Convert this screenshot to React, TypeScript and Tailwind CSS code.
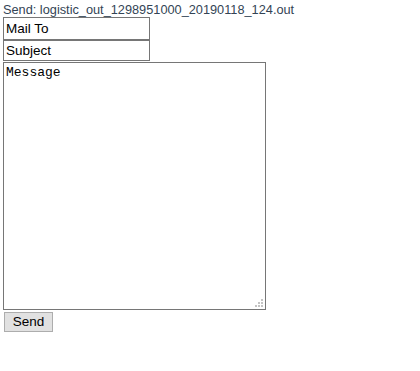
export default function App() {
  return (
    <div className="min-h-[371px] w-[420px] bg-white px-[3px] pt-[3px]" style={{ fontFamily: '"Liberation Sans", Arial, sans-serif' }}>
      <div className="text-[12.75px] leading-[14px] text-[#334455]">Send: logistic_out_1298951000_20190118_124.out</div>
      <form className="flex flex-col items-start" onSubmit={(e) => e.preventDefault()}>
        <input
          type="text"
          placeholder="Mail To"
          className="block h-[23px] w-[147px] border border-[#767676] px-[2px] text-[13.5px] text-black placeholder:text-black outline-none"
        />
        <input
          type="text"
          placeholder="Subject"
          className="block h-[21px] w-[147px] border border-[#767676] px-[2px] text-[13.5px] text-black placeholder:text-black outline-none"
        />
        <div className="relative mt-px">
          <textarea
            placeholder="Message"
            className="block h-[248px] w-[263px] resize-none border border-[#767676] px-[2px] py-[2px] text-[13px] leading-[15px] text-black placeholder:text-black outline-none"
            style={{ fontFamily: '"Liberation Mono", "Courier New", monospace' }}
          />
          <svg className="pointer-events-none absolute bottom-[3px] right-[3px]" width="8" height="8" viewBox="0 0 8 8">
            <rect x="6" y="0" width="2" height="2" fill="#c4c4c4" />
            <rect x="3" y="3" width="2" height="2" fill="#c4c4c4" />
            <rect x="6" y="3" width="2" height="2" fill="#c4c4c4" />
            <rect x="0" y="6" width="2" height="2" fill="#c4c4c4" />
            <rect x="3" y="6" width="2" height="2" fill="#c4c4c4" />
            <rect x="6" y="6" width="2" height="2" fill="#c4c4c4" />
          </svg>
        </div>
        <button
          type="submit"
          className="ml-px mt-[2px] h-[20px] w-[49px] border border-[#adadad] bg-[#e1e1e1] text-[13.5px] leading-[18px] text-black"
        >
          Send
        </button>
      </form>
    </div>
  );
}
